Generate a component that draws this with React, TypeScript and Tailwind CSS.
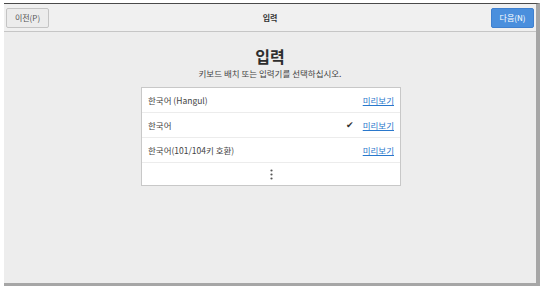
// Keyboard input selection page (Korean installer step)

const rows = [
    { name: '한국어 (Hangul)', checked: false },
    { name: '한국어', checked: true },
    { name: '한국어(101/104키 호환)', checked: false },
];

export default function App() {
    return (
        <div
            className="h-[292px] w-[543px] overflow-hidden bg-white pl-[4px] pt-[3px]"
            style={{ fontFamily: '"Noto Sans CJK KR", "Noto Sans", sans-serif' }}
        >
            <div className="flex h-[283px] w-[536px] flex-col border-b-[3px] border-r-[4px] border-t border-b-[#a6a6a6] border-r-[#a6a6a6] border-t-[#4a4a4a] bg-[#ededed]">
                {/* header bar */}
                <div className="flex h-[28px] items-center justify-between border-b border-[#c6c6c6] bg-[#f0f0f0] px-[2px]">
                    <button className="flex h-[20px] w-[43px] items-center justify-center rounded-[2px] border border-[#c4c4c4] bg-[#ececec] text-[8px] text-[#555]">
                        이전(P)
                    </button>
                    <span className="text-[8px] font-bold text-[#333]">입력</span>
                    <button className="flex h-[20px] w-[43px] items-center justify-center rounded-[2px] border border-[#3f80cf] bg-[#4a8fdd] text-[8px] text-white">
                        다음(N)
                    </button>
                </div>

                {/* body */}
                <div className="flex flex-col items-center pt-[14px]">
                    <h1 className="text-[16px] font-bold leading-[20px] text-[#2e2e2e]">입력</h1>
                    <p className="mt-[1px] text-[8.5px] leading-[12px] text-[#444]">키보드 배치 또는 입력기를 선택하십시오.</p>

                    <div className="mt-[8px] ml-[2px] w-[260px] border border-[#c8c8c8] bg-white">
                        {rows.map((row) => (
                            <div
                                key={row.name}
                                className="flex h-[25px] items-center border-b border-[#ececec] pl-[6px] pr-[6px] text-[8.5px] text-[#444]"
                            >
                                <span className="flex-1">{row.name}</span>
                                {row.checked && <span className="mr-[9px] text-[9px] text-[#333]">✔</span>}
                                <span className="text-[#2a78cc] underline">미리보기</span>
                            </div>
                        ))}
                        <div className="flex h-[22px] items-center justify-center">
                            <svg width="3" height="11" viewBox="0 0 3 11">
                                <circle cx="1.5" cy="1.5" r="1.1" fill="#555" />
                                <circle cx="1.5" cy="5.5" r="1.1" fill="#555" />
                                <circle cx="1.5" cy="9.5" r="1.1" fill="#555" />
                            </svg>
                        </div>
                    </div>
                </div>
            </div>
        </div>
    );
}
